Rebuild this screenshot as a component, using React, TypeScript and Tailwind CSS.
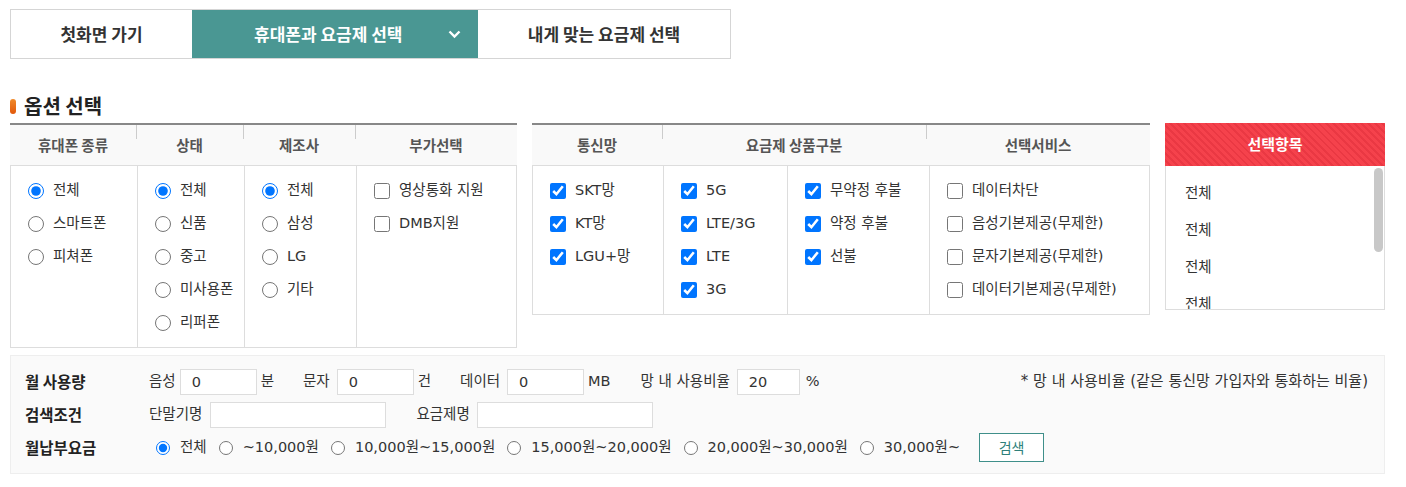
import React from 'react'

const font = { fontFamily: '"DejaVu Sans", "Noto Sans CJK KR", sans-serif' }
const hangul = { fontFamily: '"Noto Sans CJK KR", "Noto Sans", sans-serif' }

type Opt = { label: string; checked?: boolean }

const phoneKinds: Opt[] = [{ label: '전체', checked: true }, { label: '스마트폰' }, { label: '피쳐폰' }]
const states: Opt[] = [{ label: '전체', checked: true }, { label: '신품' }, { label: '중고' }, { label: '미사용폰' }, { label: '리퍼폰' }]
const makers: Opt[] = [{ label: '전체', checked: true }, { label: '삼성' }, { label: 'LG' }, { label: '기타' }]
const extras: Opt[] = [{ label: '영상통화 지원' }, { label: 'DMB지원' }]

const networks: Opt[] = [{ label: 'SKT망', checked: true }, { label: 'KT망', checked: true }, { label: 'LGU+망', checked: true }]
const planTypes: Opt[] = [{ label: '5G', checked: true }, { label: 'LTE/3G', checked: true }, { label: 'LTE', checked: true }, { label: '3G', checked: true }]
const payTypes: Opt[] = [{ label: '무약정 후불', checked: true }, { label: '약정 후불', checked: true }, { label: '선불', checked: true }]
const services: Opt[] = [{ label: '데이터차단' }, { label: '음성기본제공(무제한)' }, { label: '문자기본제공(무제한)' }, { label: '데이터기본제공(무제한)' }]

const fees = ['~10,000원', '10,000원~15,000원', '15,000원~20,000원', '20,000원~30,000원', '30,000원~']

function OptionList({ items, type, name }: { items: Opt[]; type: 'radio' | 'checkbox'; name: string }) {
  return (
    <div className="flex flex-col py-[8px] pl-[17px]">
      {items.map((it) => (
        <label key={it.label} className="flex h-[33px] items-center gap-[9px] text-[14.5px] text-[#333]">
          <input
            type={type}
            name={name}
            defaultChecked={it.checked}
            className="m-0 h-[16px] w-[16px] shrink-0 accent-[#0075ff]"
          />
          <span className="whitespace-nowrap">{it.label}</span>
        </label>
      ))}
    </div>
  )
}

function HeadCell({ children, first }: { children: React.ReactNode; first?: boolean }) {
  return (
    <div className="relative flex h-[40px] items-center justify-center text-[14.5px] font-bold text-[#555]" style={hangul}>
      {!first && <span className="absolute left-0 top-0 h-[14px] w-px bg-[#ccc]" />}
      {children}
    </div>
  )
}

const inputCls = 'h-[26px] border border-[#ddd] bg-white px-[11px] text-[14.5px] text-[#333] outline-none'

export default function App() {
  return (
    <div style={font} className="w-[1406px] bg-white pt-[9px] pl-[10px] text-[#333]">
      {/* tabs */}
      <div className="flex h-[50px] w-[721px] border border-[#d5d5d5]" style={hangul}>
        <div className="flex w-[181px] items-center justify-center text-[17px] font-bold text-[#333]">첫화면 가기</div>
        <div className="flex w-[286px] items-center bg-[#4a9793] pl-[62px] text-[17px] font-bold text-white">
          <span>휴대폰과 요금제 선택</span>
          <svg className="ml-auto mr-[17px]" width="13" height="9" viewBox="0 0 13 9" fill="none">
            <path d="M1.5 1.5 L6.5 6.5 L11.5 1.5" stroke="white" strokeWidth="2.4" />
          </svg>
        </div>
        <div className="flex flex-1 items-center justify-center text-[17px] font-bold text-[#333]">내게 맞는 요금제 선택</div>
      </div>

      {/* title */}
      <div className="mt-[38px] flex h-[18px] items-center gap-[8px]" style={hangul}>
        <span className="h-[15px] w-[6px] rounded-full bg-[linear-gradient(180deg,#f08a2a,#e2580a)]" />
        <span className="text-[20px] font-bold leading-none text-[#222]">옵션 선택</span>
      </div>

      {/* option tables */}
      <div className="mt-[8px] flex items-start">
        <div className="w-[507px]">
          <div className="grid grid-cols-[126px_107px_112px_162px] border-t-2 border-[#888] bg-[#f9f9f9] border-b border-b-[#ddd]">
            <HeadCell first>휴대폰 종류</HeadCell>
            <HeadCell>상태</HeadCell>
            <HeadCell>제조사</HeadCell>
            <HeadCell>부가선택</HeadCell>
          </div>
          <div className="grid grid-cols-[126px_107px_112px_162px] border-x border-b border-[#ddd]">
            <OptionList items={phoneKinds} type="radio" name="kind" />
            <div className="border-l border-[#ddd]"><OptionList items={states} type="radio" name="state" /></div>
            <div className="border-l border-[#ddd]"><OptionList items={makers} type="radio" name="maker" /></div>
            <div className="border-l border-[#ddd]"><OptionList items={extras} type="checkbox" name="extra" /></div>
          </div>
        </div>

        <div className="ml-[15px] w-[618px]">
          <div className="grid grid-cols-[130px_264px_224px] border-t-2 border-[#888] bg-[#f9f9f9] border-b border-b-[#ddd]">
            <HeadCell first>통신망</HeadCell>
            <HeadCell>요금제 상품구분</HeadCell>
            <HeadCell>선택서비스</HeadCell>
          </div>
          <div className="grid grid-cols-[130px_124px_142px_222px] border-x border-b border-[#ddd]">
            <OptionList items={networks} type="checkbox" name="net" />
            <div className="border-l border-[#ddd]"><OptionList items={planTypes} type="checkbox" name="plan" /></div>
            <div className="border-l border-[#ddd]"><OptionList items={payTypes} type="checkbox" name="pay" /></div>
            <div className="border-l border-[#ddd]"><OptionList items={services} type="checkbox" name="svc" /></div>
          </div>
        </div>

        <div className="ml-[15px] w-[220px]">
          <div
            className="flex h-[43px] items-center justify-center bg-[repeating-linear-gradient(45deg,#f5424c_0px,#f5424c_3px,#ea3843_3px,#ea3843_5px)] text-[15px] font-bold text-white"
            style={hangul}
          >
            선택항목
          </div>
          <div className="relative h-[144px] overflow-hidden border-x border-b border-[#ddd] pl-[19px] pt-[9px]">
            {['전체', '전체', '전체', '전체'].map((t, i) => (
              <div key={i} className="flex h-[37px] items-center text-[14.5px] text-[#333]">{t}</div>
            ))}
            <div className="absolute right-[1px] top-[2px] h-[84px] w-[9px] rounded-full bg-[#c8c8c8]" />
          </div>
        </div>
      </div>

      {/* search conditions */}
      <div className="mt-[7px] w-[1375px] border border-[#eee] bg-[#fafafa] pt-[9px] pb-[9px] pl-[14px] pr-[16px] text-[14.5px] text-[#333]">
        <div className="flex h-[33px] items-center">
          <span className="w-[124px] text-[15.5px] font-bold text-[#222]" style={hangul}>월 사용량</span>
          <span>음성</span>
          <input defaultValue="0" className={`ml-[4px] w-[77px] ${inputCls}`} />
          <span className="ml-[4px]">분</span>
          <span className="ml-[29px]">문자</span>
          <input defaultValue="0" className={`ml-[7px] w-[77px] ${inputCls}`} />
          <span className="ml-[4px]">건</span>
          <span className="ml-[29px]">데이터</span>
          <input defaultValue="0" className={`ml-[7px] w-[77px] ${inputCls}`} />
          <span className="ml-[4px]">MB</span>
          <span className="ml-[30px]">망 내 사용비율</span>
          <input defaultValue="20" className={`ml-[7px] w-[63px] ${inputCls}`} />
          <span className="ml-[6px]">%</span>
          <span className="ml-auto text-[15px]">* 망 내 사용비율 (같은 통신망 가입자와 통화하는 비율)</span>
        </div>
        <div className="flex h-[33px] items-center">
          <span className="w-[124px] text-[15.5px] font-bold text-[#222]" style={hangul}>검색조건</span>
          <span>단말기명</span>
          <input className={`ml-[8px] w-[176px] ${inputCls}`} />
          <span className="ml-[30px]">요금제명</span>
          <input className={`ml-[7px] w-[176px] ${inputCls}`} />
        </div>
        <div className="flex h-[33px] items-center">
          <span className="w-[124px] text-[15.5px] font-bold text-[#222]" style={hangul}>월납부요금</span>
          <label className="ml-[7px] flex items-center gap-[10px]">
            <input type="radio" name="fee" defaultChecked className="m-0 h-[14px] w-[14px] accent-[#0075ff]" />
            <span>전체</span>
          </label>
          {fees.map((f) => (
            <label key={f} className="ml-[12px] flex items-center gap-[10px]">
              <input type="radio" name="fee" className="m-0 h-[14px] w-[14px] accent-[#0075ff]" />
              <span className="whitespace-nowrap">{f}</span>
            </label>
          ))}
          <button className="ml-[19px] h-[29px] w-[65px] border border-[#3f8f8a] bg-white text-[14px] text-[#2f7f7a]" style={hangul}>검색</button>
        </div>
      </div>
    </div>
  )
}
